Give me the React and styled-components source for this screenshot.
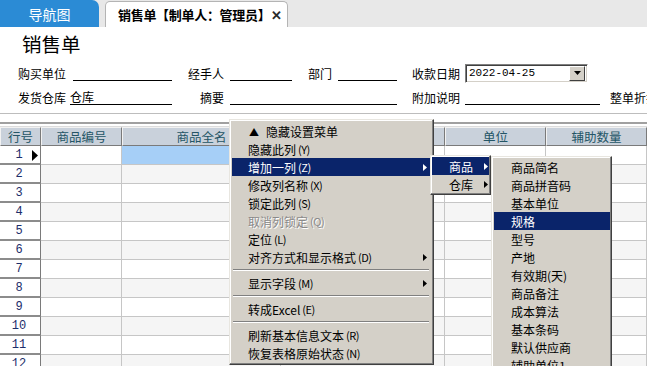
import React from "react";
import styled, { createGlobalStyle } from "styled-components";

const GlobalStyle = createGlobalStyle`
  html, body {
    margin: 0;
    padding: 0;
    background: #fff;
    overflow: hidden;
  }
  body {
    font-family: "Noto Sans CJK SC", "Liberation Sans", sans-serif;
    font-size: 12px;
    color: #000;
  }
`;

const Page = styled.div`
  position: relative;
  width: 647px;
  height: 366px;
  overflow: hidden;
  background: #fff;
`;

const TabBar = styled.div`
  display: flex;
  align-items: flex-end;
  height: 27px;
  background: #e8e8e8;
`;

const NavTab = styled.div`
  width: 99px;
  height: 27px;
  background: #2b8bd5;
  color: #fff;
  border-top-right-radius: 7px;
  display: flex;
  align-items: center;
  justify-content: center;
  font-size: 14px;
`;

const DocTab = styled.div`
  box-sizing: border-box;
  margin-left: 6px;
  width: 183px;
  height: 26px;
  background: #fff;
  border: 1px solid #b4b4b4;
  border-bottom: none;
  border-radius: 5px 5px 0 0;
  display: flex;
  align-items: center;
  padding-left: 12px;
  font-weight: bold;
  font-size: 13px;
  letter-spacing: -0.3px;
  white-space: nowrap;
`;

const CloseMark = styled.span`
  margin-left: 1px;
  font-size: 13px;
  color: #2a2a2a;
`;

const Title = styled.div`
  height: 34px;
  line-height: 34px;
  padding-left: 22px;
  font-size: 19.5px;
`;

const Form = styled.div`
  display: grid;
  grid-template-columns: 52px 102px 58px 62px 43px 62px 68px 135px 1fr;
  grid-auto-rows: 24px;
  padding-left: 18px;
  white-space: nowrap;
`;

const Label = styled.div`
  display: flex;
  align-items: center;
  justify-content: ${(p) => (p.$right ? "flex-end" : "flex-start")};
  padding-right: ${(p) => p.$pr || 0}px;
  padding-left: ${(p) => p.$pl || 0}px;
`;

const LineField = styled.div`
  align-self: center;
  height: 15px;
  line-height: 15px;
  border-bottom: 1px solid #000;
  margin-left: ${(p) => p.$ml || 0}px;
  grid-column: ${(p) => p.$span || "auto"};
`;

const DateBox = styled.div`
  align-self: center;
  box-sizing: border-box;
  width: 123px;
  height: 19px;
  display: flex;
  align-items: center;
  justify-content: space-between;
  border: 1px solid;
  border-color: #808080 #fff #fff #808080;
  box-shadow: inset 1px 1px #404040, inset -1px -1px #d4d0c8;
  padding: 0 2px 0 3px;
  font-family: "Liberation Mono", "DejaVu Sans Mono", monospace;
  font-size: 11px;
`;

const DropButton = styled.div`
  box-sizing: border-box;
  width: 16px;
  height: 15px;
  background: #d4d0c8;
  border: 1px solid;
  border-color: #fff #404040 #404040 #fff;
  display: flex;
  align-items: center;
  justify-content: center;
`;

const Rule = styled.div`
  margin-top: 4px;
  border-top: 1px solid #bdbdbd;
`;

const GridFrame = styled.div`
  margin-top: 8px;
  border-top: 2px solid #a0a0a0;
  padding-top: 2px;
`;

const Grid = styled.div`
  display: grid;
  grid-template-columns: 41px 81px 159px 164px 101px 101px;
  grid-template-rows: 19px;
  grid-auto-rows: 19px;
  border-top: 1px solid #dcdcdc;
`;

const HeadCell = styled.div`
  box-sizing: border-box;
  background: #c9d1db;
  color: #245566;
  border: 1px solid;
  border-color: #f2f2f2 #7a7a7a #7a7a7a #f2f2f2;
  display: flex;
  align-items: center;
  justify-content: center;
  font-size: 12.5px;
`;

const RowHead = styled.div`
  position: relative;
  box-sizing: border-box;
  background: #fff;
  border-right: 1px solid #7a7a7a;
  border-bottom: 2px solid #8c8c8c;
  color: #1c2d6a;
  font-family: "Liberation Mono", "DejaVu Sans Mono", monospace;
  font-size: 12px;
  display: flex;
  align-items: center;
  justify-content: center;
  padding-right: 2px;
`;

const RowMarker = styled.svg`
  position: absolute;
  right: 2px;
  top: 4px;
`;

const Cell = styled.div`
  box-sizing: border-box;
  border-right: 1px solid #c6c6c6;
  border-bottom: 1px solid #c6c6c6;
  background: ${(p) => (p.$selected ? "#a6cff7" : p.$alt ? "#f5f5f5" : "#fff")};
`;

const Menu = styled.div`
  position: absolute;
  left: ${(p) => p.$left}px;
  top: ${(p) => p.$top}px;
  width: ${(p) => p.$width}px;
  box-sizing: border-box;
  background: #d4d0c8;
  border: 1px solid;
  border-color: #e8e6e0 #404040 #404040 #e8e6e0;
  box-shadow: inset -1px -1px #808080, inset 1px 1px #fff;
  padding: ${(p) => p.$pad};
  white-space: nowrap;
`;

const Item = styled.div`
  display: flex;
  align-items: center;
  height: 18px;
  padding-left: ${(p) => p.$indent}px;
  padding-right: ${(p) => p.$pr || 3}px;
  background: ${(p) => (p.$active ? "#0a246a" : "transparent")};
  color: ${(p) => (p.$active ? "#fff" : p.$disabled ? "#8a8a8a" : "#000")};
  text-shadow: ${(p) => (p.$disabled ? "1px 1px 0 #fff" : "none")};
`;

const HotKey = styled.span`
  margin-left: 2px;
  font-size: 11px;
  letter-spacing: -0.5px;
`;

const HeadMark = styled.span`
  width: 17px;
  font-size: 10px;
`;

const SubArrow = styled.svg`
  margin-left: auto;
`;

const Separator = styled.div`
  margin: 3px 1px;
  border-top: 1px solid #808080;
  border-bottom: 1px solid #fff;
`;

const Arrow = ({ fill }) => (
  <SubArrow width="4" height="7" viewBox="0 0 4 7">
    <polygon points="0,0 4,3.5 0,7" fill={fill} />
  </SubArrow>
);

const mainItems = [
  { label: "隐藏此列", key: "Y" },
  { label: "增加一列", key: "Z", active: true, sub: true },
  { label: "修改列名称", key: "X" },
  { label: "锁定此列", key: "S" },
  { label: "取消列锁定", key: "Q", disabled: true },
  { label: "定位", key: "L" },
  { label: "对齐方式和显示格式", key: "D", sub: true },
  "sep",
  { label: "显示字段", key: "M", sub: true },
  "sep",
  { label: "转成Excel", key: "E" },
  "sep",
  { label: "刷新基本信息文本", key: "R" },
  { label: "恢复表格原始状态", key: "N" },
];

const fieldItems = [
  "商品简名",
  "商品拼音码",
  "基本单位",
  "规格",
  "型号",
  "产地",
  "有效期(天)",
  "商品备注",
  "成本算法",
  "基本条码",
  "默认供应商",
  "辅助单位1",
];

const columns = ["行号", "商品编号", "商品全名", "规格型号", "单位", "辅助数量"];

const App = () => {
  const rows = Array.from({ length: 12 }, (_, i) => i + 1);
  return (
    <Page>
      <GlobalStyle />
      <TabBar>
        <NavTab>导航图</NavTab>
        <DocTab>
          销售单【制单人：管理员】<CloseMark>✕</CloseMark>
        </DocTab>
      </TabBar>
      <Title>销售单</Title>
      <Form>
        <Label>购买单位</Label>
        <LineField $ml={3} />
        <Label $right $pr={6}>经手人</Label>
        <LineField />
        <Label $right $pr={3}>部门</Label>
        <LineField $ml={3} />
        <Label $right $pr={5}>收款日期</Label>
        <DateBox>
          2022-04-25
          <DropButton>
            <svg width="7" height="4" viewBox="0 0 7 4">
              <polygon points="0,0 7,0 3.5,4" fill="#000" />
            </svg>
          </DropButton>
        </DateBox>
        <Label />

        <Label>发货仓库</Label>
        <LineField>仓库</LineField>
        <Label $right $pr={6}>摘要</Label>
        <LineField $span="span 3" />
        <Label $right $pr={5}>附加说明</Label>
        <LineField />
        <Label $pl={10}>整单折扣</Label>
      </Form>
      <Rule />
      <GridFrame>
        <Grid>
          {columns.map((c) => (
            <HeadCell key={c}>{c}</HeadCell>
          ))}
          {rows.map((n) => (
            <React.Fragment key={n}>
              <RowHead>
                {n}
                {n === 1 && (
                  <RowMarker width="6" height="11" viewBox="0 0 6 11">
                    <polygon points="0,0 6,5.5 0,11" fill="#000" />
                  </RowMarker>
                )}
              </RowHead>
              {columns.slice(1).map((c) => (
                <Cell
                  key={c}
                  $alt={n % 2 === 0}
                  $selected={n === 1 && c === "商品全名"}
                />
              ))}
            </React.Fragment>
          ))}
        </Grid>
      </GridFrame>

      <Menu $left={229} $top={119} $width={205} $pad="2px 3px 2px 2px">
        <Item $indent={17}>
          <HeadMark>▲</HeadMark>隐藏设置菜单
        </Item>
        {mainItems.map((it, i) =>
          it === "sep" ? (
            <Separator key={i} />
          ) : (
            <Item key={i} $indent={16} $active={it.active} $disabled={it.disabled}>
              {it.label}
              <HotKey>({it.key})</HotKey>
              {it.sub && <Arrow fill={it.active ? "#fff" : "#000"} />}
            </Item>
          )
        )}
      </Menu>

      <Menu $left={430} $top={155} $width={61} $pad="1px">
        <Item $indent={17} $pr={1} $active>
          商品
          <Arrow fill="#fff" />
        </Item>
        <Item $indent={17} $pr={1}>
          仓库
          <Arrow fill="#000" />
        </Item>
      </Menu>

      <Menu $left={491} $top={156} $width={121} $pad="1px 1px 1px 2px">
        {fieldItems.map((f) => (
          <Item key={f} $indent={17} $active={f === "规格"}>
            {f}
          </Item>
        ))}
      </Menu>
    </Page>
  );
};

export default App;
